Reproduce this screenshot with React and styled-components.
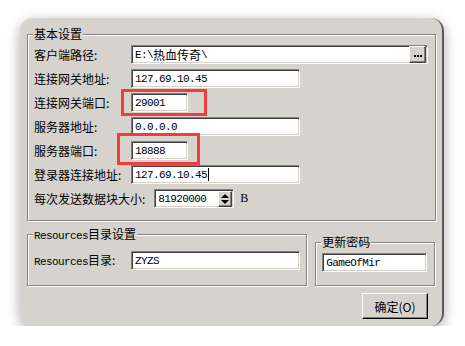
import React from "react";
import styled, { createGlobalStyle } from "styled-components";

const GlobalStyle = createGlobalStyle`
  html, body {
    margin: 0;
    padding: 0;
    background: #ffffff;
  }
  body {
    font-family: "Noto Sans CJK SC", "Liberation Sans", sans-serif;
    font-size: 12px;
    color: #000;
  }
`;

const Window = styled.div`
  box-sizing: border-box;
  margin: 18px 0 0 20px;
  width: 424px;
  height: 308px;
  padding: 16px 7px 0 7px;
  background: #d6d3ce;
  border-radius: 13px;
  border-right: 2px solid #5a5a5a;
  box-shadow: 0 4px 14px rgba(0, 0, 0, 0.32);
  display: flex;
  flex-direction: column;
`;

const Frame = styled.div`
  position: relative;
  box-sizing: border-box;
  width: ${(p) => p.w}px;
  height: ${(p) => p.h}px;
  border: 1px solid #848284;
  box-shadow: inset 1px 1px 0 #fff, 1px 1px 0 #fff;
  padding: ${(p) => p.pad};
  display: flex;
  flex-direction: column;
  gap: 5px;
`;

const Legend = styled.div`
  position: absolute;
  top: -9px;
  left: 5px;
  padding: 0 1px;
  background: #d6d3ce;
  line-height: 16px;
  white-space: nowrap;
`;

const Row = styled.div`
  display: flex;
  align-items: center;
  height: 19px;
`;

const Label = styled.div`
  width: ${(p) => (p.auto ? "auto" : "97px")};
  margin-right: ${(p) => (p.auto ? "9px" : "0")};
  white-space: nowrap;
  line-height: 19px;
`;

const Latin = styled.span`
  font-family: "Liberation Mono", monospace;
  font-size: 11px;
  letter-spacing: -0.6px;
`;

const Field = styled.div`
  position: relative;
  box-sizing: border-box;
  width: ${(p) => p.w}px;
  height: 19px;
  background: #fff;
  border-top: 1px solid #808080;
  border-left: 1px solid #808080;
  border-bottom: 1px solid #fff;
  border-right: 1px solid #fff;
  box-shadow: inset 1px 1px 0 #404040, inset -1px -1px 0 #d4d0c8;
  padding-left: 3px;
  display: flex;
  align-items: center;
  font-family: "Liberation Mono", monospace;
  font-size: 11px;
  letter-spacing: -0.6px;
  white-space: nowrap;
`;

const Cjk = styled.span`
  font-family: "Noto Sans CJK SC", sans-serif;
  font-size: 12px;
  letter-spacing: 0;
`;

const Caret = styled.span`
  display: inline-block;
  width: 1px;
  height: 13px;
  margin-left: 1px;
  background: #000;
`;

const raised = `
  box-sizing: border-box;
  background: #d6d3ce;
  border-top: 1px solid #fff;
  border-left: 1px solid #fff;
  border-bottom: 1px solid #404040;
  border-right: 1px solid #404040;
  box-shadow: inset -1px -1px 0 #808080;
`;

const BrowseButton = styled.div`
  ${raised}
  position: absolute;
  right: 1px;
  top: 0px;
  width: 17px;
  height: 17px;
  display: flex;
  align-items: center;
  justify-content: center;
  gap: 1px;
  padding-top: 2px;
`;

const Dot = styled.span`
  width: 2px;
  height: 2px;
  background: #000;
`;

const SpinBox = styled.div`
  ${raised}
  position: absolute;
  right: 1px;
  top: 1px;
  width: 14px;
  height: 16px;
  display: flex;
  flex-direction: column;
  align-items: center;
  justify-content: center;
  gap: 2px;
`;

const Arrow = styled.span`
  width: 0;
  height: 0;
  border-left: 4px solid transparent;
  border-right: 4px solid transparent;
  ${(p) => (p.up ? "border-bottom: 4px solid #000;" : "border-top: 4px solid #000;")}
`;

const Unit = styled.span`
  margin-left: 6px;
  font-family: "Liberation Serif", serif;
  font-size: 12px;
`;

const Highlight = styled.div`
  position: absolute;
  box-sizing: border-box;
  left: ${(p) => p.l}px;
  top: ${(p) => p.t}px;
  width: ${(p) => p.w}px;
  height: ${(p) => p.h}px;
  border: 3px solid #f03c3c;
  pointer-events: none;
`;

const Bottom = styled.div`
  display: flex;
  align-items: flex-end;
  gap: 8px;
  margin-top: 13px;
`;

const Footer = styled.div`
  display: flex;
  justify-content: flex-end;
  padding: 7px 7px 0 0;
`;

const Button = styled.div`
  ${raised}
  width: 66px;
  height: 26px;
  display: flex;
  align-items: center;
  justify-content: center;
  border-bottom-color: #000;
  border-right-color: #000;
`;

const rows = [
  { label: "客户端路径:", w: 297, text: "E:\\", cjk: "热血传奇", tail: "\\", browse: true },
  { label: "连接网关地址:", w: 169, text: "127.69.10.45" },
  { label: "连接网关端口:", w: 57, text: "29001", mark: { l: -11, t: -5, w: 86, h: 27 } },
  { label: "服务器地址:", w: 169, text: "0.0.0.0" },
  { label: "服务器端口:", w: 57, text: "18888", mark: { l: -15, t: -9, w: 83, h: 32 } },
  { label: "登录器连接地址:", w: 169, text: "127.69.10.45", caret: true },
];

export default function App() {
  return (
    <>
      <GlobalStyle />
      <Window>
        <Frame w={409} h={187} pad="10px 6px 12px 6px">
          <Legend>基本设置</Legend>
          {rows.map((r) => (
            <Row key={r.label}>
              <Label>{r.label}</Label>
              <Field w={r.w}>
                {r.text}
                {r.cjk && <Cjk>{r.cjk}</Cjk>}
                {r.tail}
                {r.caret && <Caret />}
                {r.browse && (
                  <BrowseButton>
                    <Dot />
                    <Dot />
                    <Dot />
                  </BrowseButton>
                )}
                {r.mark && <Highlight {...r.mark} />}
              </Field>
            </Row>
          ))}
          <Row>
            <Label auto>每次发送数据块大小:</Label>
            <Field w={80}>
              81920000
              <SpinBox>
                <Arrow up />
                <Arrow />
              </SpinBox>
            </Field>
            <Unit>B</Unit>
          </Row>
        </Frame>
        <Bottom>
          <Frame w={281} h={52} pad="16px 6px 0 6px">
            <Legend>
              <Latin>Resources</Latin>目录设置
            </Legend>
            <Row>
              <Label>
                <Latin>Resources</Latin>目录:
              </Label>
              <Field w={169}>ZYZS</Field>
            </Row>
          </Frame>
          <Frame w={120} h={44} pad="10px 6px 0 6px">
            <Legend>更新密码</Legend>
            <Row>
              <Field w={105}>GameOfMir</Field>
            </Row>
          </Frame>
        </Bottom>
        <Footer>
          <Button>确定(O)</Button>
        </Footer>
      </Window>
    </>
  );
}
